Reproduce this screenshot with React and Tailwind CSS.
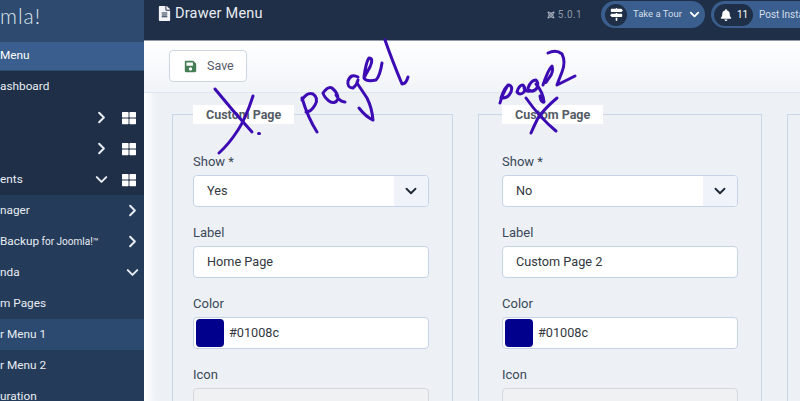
import React from "react";
import { ChevronRight, ChevronDown } from "lucide-react";
import { FaBell, FaFileAlt, FaJoomla, FaSave, FaThLarge } from "react-icons/fa";
import { FaSignsPost } from "react-icons/fa6";

const topRows = [
  { text: "ashboard" },
  { text: "", arrow: "right", grid: true },
  { text: "", arrow: "right", grid: true },
  { text: "ents", arrow: "down", grid: true },
];

const subRows = [
  { text: "nager", arrow: "right" },
  { text: "Backup", small: " for Joomla!™", arrow: "right" },
  { text: "nda", arrow: "down" },
  { text: "m Pages" },
  { text: "r Menu 1", active: true },
  { text: "r Menu 2" },
  { text: "uration" },
];

const Row = ({ row, sub }) => (
  <div
    className={`flex h-[31px] shrink-0 items-center text-[11.8px] text-[#e8edf3] ${
      row.active ? "bg-[#2c4a70]" : ""
    }`}
  >
    <span className="flex-1 whitespace-nowrap">
      {row.text}
      {row.small && <span className="text-[10px]">{row.small}</span>}
    </span>
    {row.arrow === "right" && (
      <ChevronRight size={19} strokeWidth={2.5} className={sub ? "mr-[2px]" : "mr-[33px]"} />
    )}
    {row.arrow === "down" && (
      <ChevronDown size={19} strokeWidth={2.5} className={sub ? "mr-[2px]" : "mr-[33px]"} />
    )}
    {row.grid && <FaThLarge size={14} className="absolute left-[122px] text-white" />}
  </div>
);

const Sidebar = () => (
  <div className="flex h-full w-[144px] shrink-0 flex-col overflow-hidden bg-[#253b5a]">
    <div className="flex h-[41px] shrink-0 items-start bg-[#2e4a6f] pt-[1px] font-['Lato',sans-serif] text-[21px] leading-[30px] font-light tracking-[1px] text-[#dfe6ee]">
      mla!<sup className="top-[-8px] text-[6px]">®</sup>
    </div>
    <div className="flex h-[30px] shrink-0 items-center border-y border-[#2e4a6f] bg-[#3a5f8e] text-[11.8px] text-white">
      Menu
    </div>
    <div className="relative shrink-0 bg-[#1f2f47]">
      {topRows.map((row, i) => (
        <Row key={i} row={row} />
      ))}
    </div>
    {subRows.map((row) => (
      <Row key={row.text} row={row} sub />
    ))}
  </div>
);

const Header = () => (
  <div className="flex h-[41px] shrink-0 items-start border-b border-[#8f9aaa] bg-[#1f2f47] pl-[13px] text-white">
    <FaFileAlt size={15} className="mt-[6px] text-[#f2f4f7]" />
    <span className="ml-[3px] mt-[4px] text-[14.5px] leading-5 tracking-[0.2px] text-[#e9edf2]">
      Drawer Menu
    </span>
    <div className="ml-auto mt-[1px] flex items-center">
      <FaJoomla size={8} className="text-[#aab4c1]" />
      <span className="ml-[3px] text-[10px] tracking-[0.4px] text-[#8d99a8]">5.0.1</span>
      <div className="ml-[19px] flex h-[27px] w-[104px] items-center rounded-full bg-[#3a5f8e] pl-[4px]">
        <div className="flex size-[22px] items-center justify-center rounded-full bg-[#1f2f47]">
          <FaSignsPost size={13} />
        </div>
        <span className="ml-[6px] text-[9.5px] text-[#d5deea]">Take a Tour</span>
        <ChevronDown size={15} strokeWidth={3} className="ml-[5px]" />
      </div>
      <div className="ml-[6px] flex h-[27px] w-[89px] shrink-0 items-center overflow-hidden rounded-l-full bg-[#3a5f8e] pl-[3px]">
        <div className="flex h-[22px] w-[39px] shrink-0 items-center gap-[5px] rounded-full bg-[#1f2f47] pl-[6px]">
          <FaBell size={12} />
          <span className="text-[10px]">11</span>
        </div>
        <span className="ml-[6px] whitespace-nowrap text-[10px] text-[#d5deea]">Post Installation</span>
      </div>
    </div>
  </div>
);

const Field = ({ label, children }) => (
  <div className="flex h-[71px] flex-col">
    <label className="h-[24px] pt-[3px] text-[13px] leading-4 text-[#3a4858]">{label}</label>
    {children}
  </div>
);

const TextBox = ({ children }) => (
  <div className="flex h-[32px] items-center rounded border border-[#c5d3e6] bg-white pl-[13px] text-[12.7px] text-[#32383e]">
    {children}
  </div>
);

const SelectBox = ({ value }) => (
  <div className="flex h-[32px] items-center overflow-hidden rounded border border-[#c5d3e6] bg-white pl-[13px] text-[12.7px] text-[#32383e]">
    <span className="flex-1">{value}</span>
    <div className="flex h-full w-[34px] items-center justify-center bg-[#f0f4fa]">
      <ChevronDown size={18} strokeWidth={2.5} className="text-[#1f2a38]" />
    </div>
  </div>
);

const ColorBox = () => (
  <div className="flex h-[32px] items-center rounded border border-[#c5d3e6] bg-white pl-[2px] text-[12.7px] text-[#32383e]">
    <div className="h-[28px] w-[28px] rounded-sm bg-[#01008c]" />
    <span className="ml-[5px]">#01008c</span>
  </div>
);

const Card = ({ box, legend, show, label }) => (
  <div className={`relative h-[340px] shrink-0 border border-[#c9d7e8] pt-[36px] ${box}`}>
    <div
      className={`absolute top-[-10px] h-[19px] bg-white px-[13px] text-[12.5px] leading-[19px] font-bold text-[#555c66] ${legend}`}
    >
      Custom Page
    </div>
    <Field label="Show *">
      <SelectBox value={show} />
    </Field>
    <Field label="Label">
      <TextBox>{label}</TextBox>
    </Field>
    <Field label="Color">
      <ColorBox />
    </Field>
    <Field label="Icon">
      <div className="h-[33px] rounded border border-[#d5d8dc] bg-[#f0f1f2]" />
    </Field>
  </div>
);

// the pen marks someone drew on top of the screenshot
const Scribbles = () => (
  <svg
    className="pointer-events-none absolute left-0 top-0"
    width="800"
    height="401"
    viewBox="0 0 800 401"
    fill="none"
    stroke="#3d0bb3"
    strokeWidth="3"
    strokeLinecap="round"
    strokeLinejoin="round"
  >
    <path d="M215 89 Q232 110 252 132" />
    <path d="M253 96 Q246 118 238 130 Q229 144 219 153" />
    <path d="M258.500 133.500 h1" />
    <path d="M302 98 Q308 118 317 132" />
    <path d="M302 100 Q307 92 313 94 Q319 98 315 105 Q311 112 306 112" />
    <path d="M323 93 Q328 86 332 88 Q338 93 338 99 Q335 105 329 101 Q324 97 323 93 M336 95 Q340 102 345 102" />
    <path d="M358 77 Q351 73 348 81 Q347 88 353 88 Q357 85 358 80 M357 83 Q363 92 367 98 Q372 108 373 120 Q366 117 359 108" />
    <path d="M364 77 Q366 62 369 58 Q374 58 370 67 Q366 74 364 78 Q366 82 376 80 Q380 76 382 63" />
    <path d="M385 40 Q392 60 402 84 Q406 84 408 77" />
    <path d="M508 85 Q502 95 500 103 M501 98 Q505 86 509 85 Q513 86 511 92 Q508 98 503 98" />
    <path d="M517 92 Q519 85 523 85 Q526 88 524 92 Q520 96 517 92 M524 88 Q526 92 530 91" />
    <path d="M528 88 Q531 80 536 80 Q539 83 537 88 Q533 93 529 90 M536 84 Q543 92 544 102 Q541 103 540 96" />
    <path d="M543 85 Q548 70 552 66 Q554 72 549 78 Q545 84 546 82 M548 53 Q556 49 562 54 Q566 62 562 72 Q558 82 557 85 L575 76" />
    <path d="M526 98 Q540 118 556 131" />
    <path d="M557 98 Q545 108 538 118 Q534 126 531 133" />
  </svg>
);

export default function App() {
  return (
    <div className="relative flex h-[401px] w-[800px] overflow-hidden bg-[#edf1f6] font-['Roboto',sans-serif]">
      <Sidebar />
      <div className="flex min-w-0 flex-1 flex-col shadow-[inset_12px_0_10px_-6px_#ffffff]">
        <Header />
        <div className="h-[51px] shrink-0 bg-gradient-to-b from-white to-[#f1f4f8] pl-[25px] pt-[9px]">
          <div className="flex h-[32px] w-[78px] items-center rounded border border-[#ccd6e3] bg-white pl-[14px] text-[12.5px] text-[#555c66]">
            <FaSave size={13} className="text-[#457d54]" />
            <span className="ml-[10px]">Save</span>
          </div>
        </div>
        <div className="flex flex-1 border-t border-[#dfe6ef] pl-[28px] pt-[21px]">
          <Card box="w-[281px] mr-[25px] pl-[20px] pr-[23px]" legend="left-[20px]" show="Yes" label="Home Page" />
          <Card box="w-[284px] mr-[25px] pl-[23px] pr-[23px]" legend="left-[23px]" show="No" label="Custom Page 2" />
          <div className="h-[340px] w-[100px] shrink-0 border border-[#c9d7e8]" />
        </div>
      </div>
      <Scribbles />
    </div>
  );
}
